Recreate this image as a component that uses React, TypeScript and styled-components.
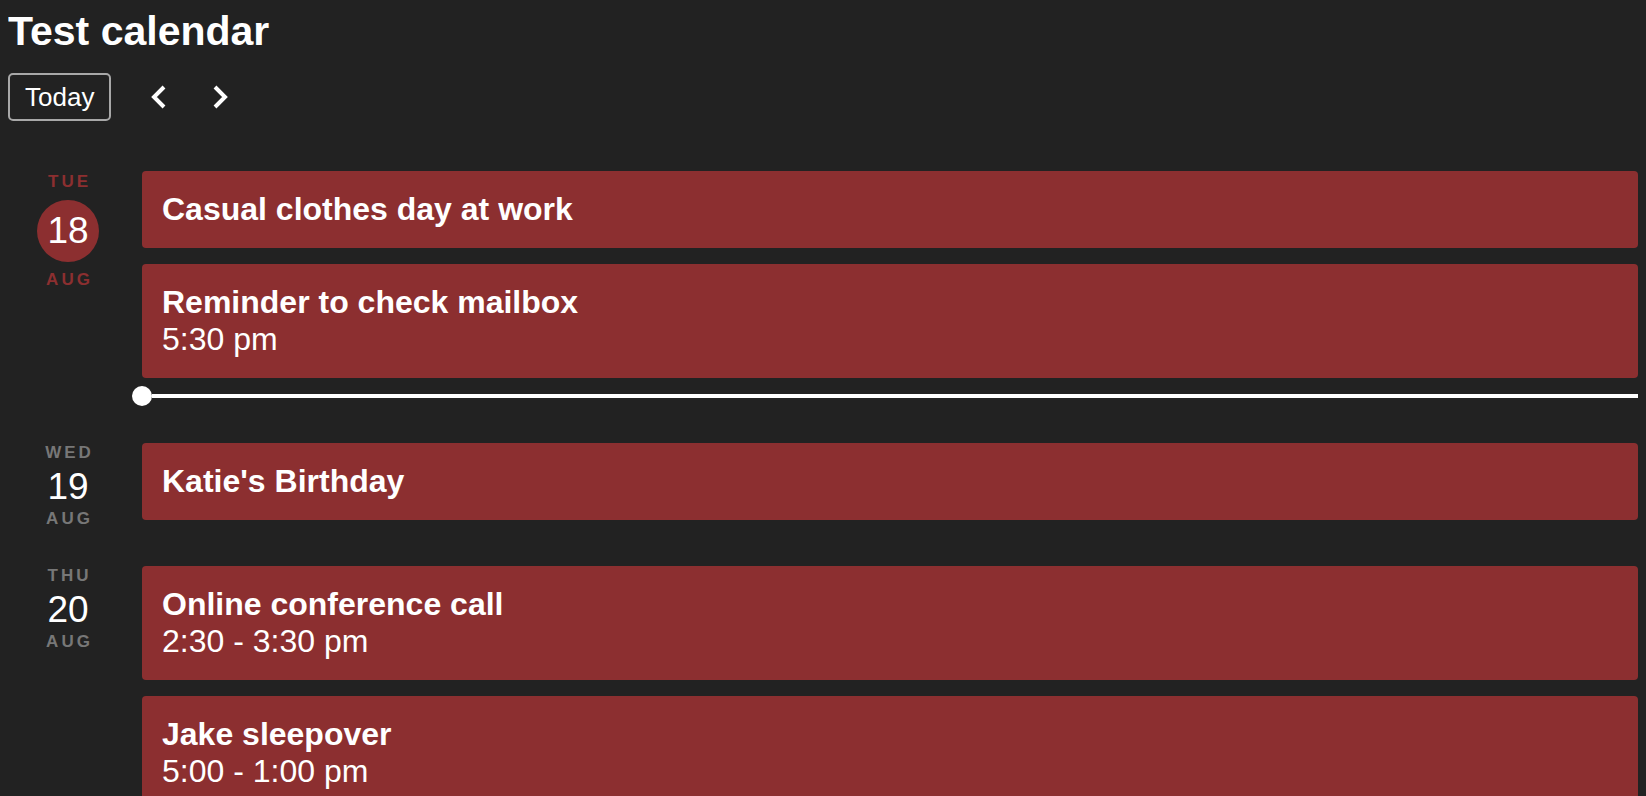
import styled, { createGlobalStyle } from "styled-components";

const palette = {
  bg: "#222222",
  event: "#8c2f30",
  muted: "#777777",
  border: "#a8a8a8",
};

const GlobalStyle = createGlobalStyle`
  html, body {
    overflow: hidden;
  }
  body {
    margin: 8px;
    background: ${palette.bg};
    color: #ffffff;
    font-family: "Liberation Sans", Arial, sans-serif;
  }
`;

const Title = styled.h1`
  margin: 0;
  font-size: 41px;
  line-height: 46px;
  font-weight: 700;
`;

const Toolbar = styled.div`
  display: flex;
  align-items: center;
  gap: 21px;
  margin-top: 19px;
`;

const TodayButton = styled.button`
  font-family: inherit;
  font-size: 26px;
  line-height: 30px;
  color: #ffffff;
  background: transparent;
  border: 2px solid ${palette.border};
  border-radius: 5px;
  padding: 7px 15px;
  margin-right: 7px;
  cursor: pointer;
`;

const NavButton = styled.button`
  width: 40px;
  height: 48px;
  display: flex;
  align-items: center;
  justify-content: center;
  padding: 0;
  background: transparent;
  border: none;
  color: #ffffff;
  cursor: pointer;
`;

const Agenda = styled.div`
  display: flex;
  flex-direction: column;
  gap: 37px;
  margin-top: 50px;
`;

const DaySection = styled.section`
  display: grid;
  grid-template-columns: 120px 1fr;
  column-gap: 14px;
  align-items: start;
`;

const DayLabel = styled.div<{ $today?: boolean }>`
  display: flex;
  flex-direction: column;
  align-items: center;
  padding-top: ${(p) => (p.$today ? "1px" : "0")};
  color: ${(p) => (p.$today ? palette.event : palette.muted)};
`;

const DayText = styled.div`
  font-size: 17px;
  line-height: 20px;
  font-weight: 700;
  letter-spacing: 3px;
  padding-left: 3px;
`;

const DateNum = styled.div<{ $today?: boolean }>`
  font-size: 37px;
  color: #ffffff;
  text-align: center;
  ${(p) =>
    p.$today
      ? `
    width: 62px;
    height: 62px;
    line-height: 62px;
    border-radius: 50%;
    background: ${palette.event};
    margin: 8px 0 8px;
  `
      : `
    line-height: 44px;
    margin-top: 2px;
  `}
`;

const Events = styled.div`
  display: flex;
  flex-direction: column;
  gap: 16px;
`;

const EventCard = styled.div`
  background: ${palette.event};
  border-radius: 4px;
  padding: 20px;
  font-size: 32px;
  line-height: 37px;
`;

const EventTitle = styled.div`
  font-weight: 700;
`;

const EventTime = styled.div`
  font-weight: 400;
`;

const NowRow = styled.div`
  display: flex;
  align-items: center;
  height: 20px;
  margin: -8px 0 0 -10px;
`;

const NowDot = styled.div`
  width: 20px;
  height: 20px;
  border-radius: 50%;
  background: #ffffff;
  flex-shrink: 0;
`;

const NowBar = styled.div`
  flex: 1;
  height: 4px;
  background: #ffffff;
`;

type CalEvent = { title: string; time?: string };
type Day = {
  dow: string;
  date: number;
  month: string;
  today?: boolean;
  events: CalEvent[];
};

const days: Day[] = [
  {
    dow: "TUE",
    date: 18,
    month: "AUG",
    today: true,
    events: [
      { title: "Casual clothes day at work" },
      { title: "Reminder to check mailbox", time: "5:30 pm" },
    ],
  },
  {
    dow: "WED",
    date: 19,
    month: "AUG",
    events: [{ title: "Katie's Birthday" }],
  },
  {
    dow: "THU",
    date: 20,
    month: "AUG",
    events: [
      { title: "Online conference call", time: "2:30 - 3:30 pm" },
      { title: "Jake sleepover", time: "5:00 - 1:00 pm" },
    ],
  },
];

function Chevron({ dir }: { dir: "left" | "right" }) {
  const d = dir === "left" ? "M14 2 L4 12 L14 22" : "M4 2 L14 12 L4 22";
  return (
    <svg width="18" height="24" viewBox="0 0 18 24" fill="none">
      <path d={d} stroke="currentColor" strokeWidth="4" strokeLinejoin="miter" />
    </svg>
  );
}

export default function App() {
  return (
    <>
      <GlobalStyle />
      <Title>Test calendar</Title>
      <Toolbar>
        <TodayButton>Today</TodayButton>
        <NavButton aria-label="Previous">
          <Chevron dir="left" />
        </NavButton>
        <NavButton aria-label="Next">
          <Chevron dir="right" />
        </NavButton>
      </Toolbar>
      <Agenda>
        {days.map((day) => (
          <DaySection key={day.date}>
            <DayLabel $today={day.today}>
              <DayText>{day.dow}</DayText>
              <DateNum $today={day.today}>{day.date}</DateNum>
              <DayText>{day.month}</DayText>
            </DayLabel>
            <Events>
              {day.events.map((ev) => (
                <EventCard key={ev.title}>
                  <EventTitle>{ev.title}</EventTitle>
                  {ev.time && <EventTime>{ev.time}</EventTime>}
                </EventCard>
              ))}
              {day.today && (
                <NowRow>
                  <NowDot />
                  <NowBar />
                </NowRow>
              )}
            </Events>
          </DaySection>
        ))}
      </Agenda>
    </>
  );
}
